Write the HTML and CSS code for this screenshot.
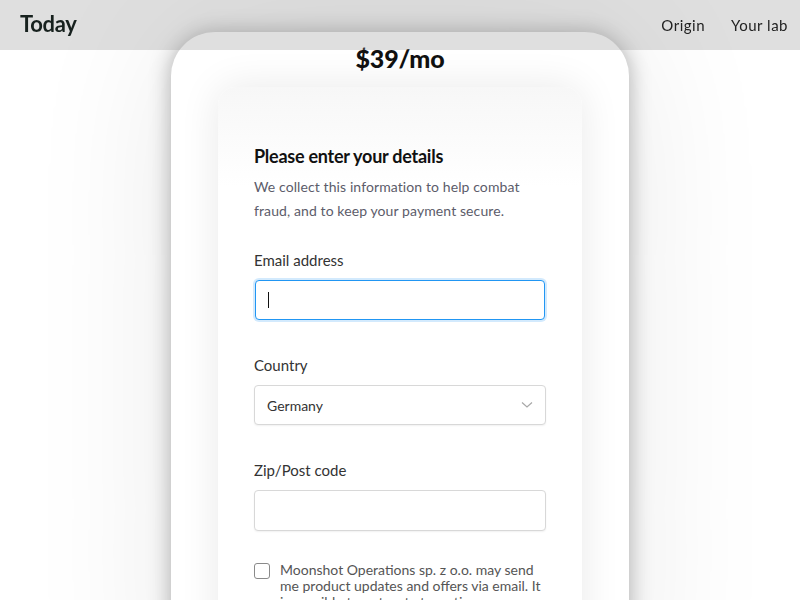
FILE: index.html
```html
<!DOCTYPE html>
<html lang="en">
<head>
<meta charset="utf-8">
<title>Checkout</title>
<link rel="stylesheet" href="styles.css">
</head>
<body>
<header class="topbar">
  <div class="brand">Today</div>
  <nav class="nav">
    <a class="nav-link">Origin</a>
    <a class="nav-link">Your lab</a>
  </nav>
</header>
<main class="page">
  <section class="plan-card">
    <div class="price">$39/mo</div>
    <div class="form-card">
      <h2 class="form-title">Please enter your details</h2>
      <p class="form-desc">We collect this information to help combat fraud, and to keep your payment secure.</p>

      <div class="field">
        <label class="label">Email address</label>
        <div class="input input-focus"><span class="caret"></span></div>
      </div>

      <div class="field">
        <label class="label">Country</label>
        <div class="input select">
          <span class="select-value">Germany</span>
          <svg class="chevron" width="12" height="8" viewBox="0 0 12 8"><path d="M1 1.5 L6 6 L11 1.5" fill="none" stroke="#a8a8a8" stroke-width="1.2"/></svg>
        </div>
      </div>

      <div class="field">
        <label class="label">Zip/Post code</label>
        <div class="input input-zip"></div>
      </div>

      <div class="consent">
        <span class="checkbox"></span>
        <span class="consent-text">Moonshot Operations sp. z o.o. may send me product updates and offers via email. It is possible to opt-out at any time.</span>
      </div>
    </div>
  </section>
</main>
</body>
</html>
```

FILE: styles.css
```css
html, body {
  margin: 0;
  padding: 0;
  background: #ffffff;
  font-family: Lato, "Liberation Sans", sans-serif;
  overflow: hidden;
  height: 600px;
}

.topbar {
  position: fixed;
  top: 0;
  left: 0;
  right: 0;
  height: 50px;
  background: rgba(150, 150, 150, 0.3);
  display: flex;
  align-items: center;
  justify-content: space-between;
  padding: 0 12px 0 20px;
  z-index: 10;
}

.brand {
  font-size: 22px;
  font-weight: 700;
  color: #17211e;
  letter-spacing: -0.3px;
  margin-top: -4px;
}

.nav {
  display: flex;
  gap: 26px;
}

.nav-link {
  font-size: 15px;
  color: #222;
  letter-spacing: 0.5px;
}

.page {
  display: flex;
  justify-content: center;
  padding-top: 32px;
}

.plan-card {
  width: 458px;
  height: 700px;
  background: #fff;
  border-radius: 44px;
  box-shadow: 0 0 22px rgba(0, 0, 0, 0.3), 0 0 150px rgba(0, 0, 0, 0.09);
  display: flex;
  flex-direction: column;
  align-items: center;
  padding-top: 11px;
  box-sizing: border-box;
}

.price {
  font-size: 25px;
  font-weight: 900;
  color: #111;
  line-height: 30px;
  letter-spacing: -0.2px;
}

.form-card {
  width: 364px;
  margin-top: 14px;
  background: linear-gradient(#f7f7f7, #ffffff 100px);
  border-radius: 18px;
  box-shadow: 0 0 40px rgba(0, 0, 0, 0.09);
  padding: 58px 36px 40px;
  box-sizing: border-box;
}

.form-title {
  margin: 0;
  font-size: 18px;
  font-weight: 700;
  color: #111;
  line-height: 22px;
  letter-spacing: -0.25px;
}

.form-desc {
  margin: 8px 0 0;
  font-size: 14px;
  line-height: 24px;
  color: #5c5c6a;
  letter-spacing: 0.1px;
}

.field {
  margin-top: 25px;
}

.field + .field {
  margin-top: 33px;
}

.label {
  display: block;
  font-size: 15px;
  color: #333;
  line-height: 24px;
  margin-bottom: 8px;
}

.input {
  height: 40px;
  border: 1px solid #d8d8d8;
  border-radius: 4px;
  background: #fff;
  box-shadow: 0 1px 2px rgba(0, 0, 0, 0.06);
  display: flex;
  align-items: center;
  padding: 0 12px;
  box-sizing: border-box;
}

.input-focus {
  border: 1px solid #2196f3;
  box-shadow: 0 0 0 2px rgba(33, 150, 243, 0.2);
  margin: 0 1px;
}

.caret {
  width: 1px;
  height: 16px;
  background: #111;
}

.select {
  justify-content: space-between;
}

.select-value {
  font-size: 14px;
  color: #333;
}

.input-zip {
  height: 41px;
}

.consent {
  display: flex;
  gap: 10px;
  margin-top: 31px;
  align-items: flex-start;
}

.checkbox {
  flex: none;
  width: 14px;
  height: 14px;
  border: 1px solid #8a8a8a;
  border-radius: 3px;
  margin-top: 1px;
}

.consent-text {
  font-size: 14px;
  line-height: 16px;
  color: #555;
}
```
